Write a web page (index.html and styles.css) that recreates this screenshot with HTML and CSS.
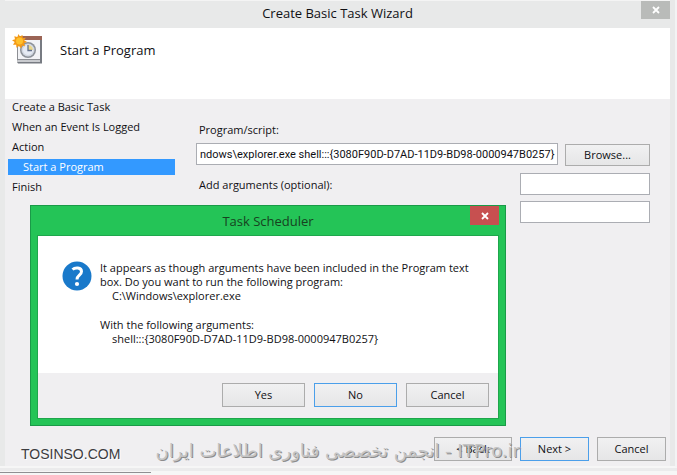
FILE: index.html
```html
<!DOCTYPE html>
<html lang="en">
<head>
<meta charset="utf-8">
<title>Create Basic Task Wizard</title>
<link rel="stylesheet" href="styles.css">
</head>
<body>
<div class="wizard">
  <header class="titlebar">
    <h1 class="title">Create Basic Task Wizard</h1>
    <button class="close" type="button" aria-label="Close"><svg width="8" height="8" viewBox="0 0 8 8"><path d="M1 1l6 6M7 1L1 7" stroke="#fff" stroke-width="1.8"/></svg></button>
  </header>
  <section class="banner">
    <svg class="banner-icon" width="32" height="32" viewBox="0 0 32 32">
      <path d="M5 28V5h24v23l-2 2H7z" fill="#8d8f94"/>
      <path d="M6 5h22v21H6z" fill="#f2f3f6"/>
      <path d="M6 3h24v4H6z" fill="#9b6455"/>
      <path d="M28 7h2v22l-2 1z" fill="#777b82"/>
      <path d="M5 27h23v2H6z" fill="#c9cbcf"/>
      <path d="M5 29h25v1.500H6z" fill="#777b82"/>
      <circle cx="16" cy="17" r="8" fill="#8d9299"/>
      <circle cx="16" cy="17" r="6.500" fill="#d2d8e2"/>
      <circle cx="16" cy="17" r="5" fill="#e6ebf4"/>
      <path d="M16 12v5h5a5 5 0 0 0-5-5" fill="#ead88c"/>
      <path d="M16 12v5.500h4" fill="none" stroke="#64718a" stroke-width="1.300"/>
      <path d="M6.500 1l1.400 2.600L10.500 2l.3 3 3-.2-1.600 2.500L15 9l-3 1.300 1 2.900-3-.7-.8 2.900L7 13l-2.600 1.800-.2-3.100-3.200.1L2.700 9 0 7.200l3-1L2.300 3.200l3 .8z" fill="#f49a16"/>
      <circle cx="7.500" cy="8" r="3.500" fill="#ffc12b"/>
    </svg>
    <h2 class="banner-title">Start a Program</h2>
  </section>
  <main class="content">
    <ol class="steps">
      <li>Create a Basic Task</li>
      <li>When an Event Is Logged</li>
      <li>Action</li>
      <li class="current" aria-current="step">Start a Program</li>
      <li>Finish</li>
    </ol>
    <form class="fields">
      <label for="program">Program/script:</label>
      <div class="row">
        <input class="box program" id="program" type="text" value="ndows\explorer.exe shell:::{3080F90D-D7AD-11D9-BD98-0000947B0257}">
        <button class="btn browse" type="button">Browse...</button>
      </div>
      <div class="row args">
        <label for="args">Add arguments (optional):</label>
        <input class="box short" id="args" type="text">
      </div>
      <div class="row start">
        <input class="box short" type="text" aria-label="Start in (optional)">
      </div>
    </form>
  </main>
  <footer class="actions">
    <button class="btn back" type="button">&lt; Back</button>
    <button class="btn primary" type="button">Next &gt;</button>
    <button class="btn" type="button">Cancel</button>
  </footer>
</div>
<div class="edge"></div>

<div class="dialog" role="dialog" aria-labelledby="dialog-title">
  <div class="dialog-bar">
    <h2 class="title" id="dialog-title">Task Scheduler</h2>
    <button class="close danger" type="button" aria-label="Close"><svg width="8" height="8" viewBox="0 0 8 8"><path d="M1 1l6 6M7 1L1 7" stroke="#fff" stroke-width="1.800"/></svg></button>
  </div>
  <div class="dialog-panel">
    <div class="message">
      <svg class="question" width="30" height="30" viewBox="0 0 30 30">
        <circle cx="15" cy="15" r="14.500" fill="#1979ca"/>
        <path d="M10.500 8.500c2.500-2.300 9-2.500 9 2 0 3.800-4.500 3.600-4.500 8" fill="none" stroke="#fff" stroke-width="3"/>
        <circle cx="15" cy="23" r="2.100" fill="#fff"/>
      </svg>
      <div class="message-text">
        <p>It appears as though arguments have been included in the Program text<br>box. Do you want to run the following program:</p>
        <p class="value">C:\Windows\explorer.exe</p>
        <p class="second">With the following arguments:</p>
        <p class="value">shell:::{3080F90D-D7AD-11D9-BD98-0000947B0257}</p>
      </div>
    </div>
    <div class="dialog-actions">
      <button class="btn" type="button">Yes</button>
      <button class="btn primary" type="button">No</button>
      <button class="btn" type="button">Cancel</button>
    </div>
  </div>
</div>

<div class="mark site">TOSINSO.COM</div>
<div class="mark persian" lang="fa" dir="rtl"><bdi>ITPro.ir</bdi> - انجمن تخصصی فناوری اطلاعات ایران</div>
</body>
</html>
```
FILE: styles.css
```css
* { box-sizing: border-box; }

body {
  margin: 0;
  position: relative;
  min-height: 100vh;
  display: flex;
  flex-direction: column;
  background: #ebebec;
  color: #101014;
  font: 11px/14px "Open Sans", sans-serif;
}

h1, h2, p, ol { margin: 0; padding: 0; font-weight: normal; }

button, input { font: inherit; color: inherit; }

.wizard {
  flex: 1;
  display: flex;
  flex-direction: column;
  border-right: 2px solid #f3f3f4;
  border-bottom: 2px solid #f6f6f6;
  padding: 0 5px;
  background: #e8e9e9;
}

.titlebar, .dialog-bar {
  position: relative;
  display: flex;
  align-items: center;
  justify-content: center;
  height: 28px;
}

.titlebar { border-top: 1px solid #f4f4f4; padding-bottom: 3px; }

.title { font-size: 13px; line-height: 20px; }

.close {
  position: absolute;
  top: 0;
  right: 0;
  display: flex;
  align-items: center;
  justify-content: center;
  width: 29px;
  height: 18px;
  padding: 0;
  border: 0;
  background: #b9bbb9;
}

.close.danger { background: #c75050; height: 19px; }

.banner {
  display: flex;
  gap: 16px;
  height: 71px;
  padding: 5px 7px;
  background: #fff;
}

.banner-title { font-size: 13px; line-height: 34px; }

.content {
  flex: 1;
  display: grid;
  grid-template-columns: 167px 1fr;
  gap: 21px;
  padding: 0 20px 0 3px;
  background: #f0eff1;
}

.steps { list-style: none; }
.steps li { padding: 1px 4px; margin-bottom: 4px; line-height: 14px; }
.steps .current { padding-left: 15px; background: #3399ff; color: #fff; }

.fields { padding-top: 24px; }
.fields label { display: block; padding-left: 3px; }

.row { display: flex; gap: 7px; }

.box {
  height: 22px;
  min-width: 0;
  padding: 0 0 0 3px;
  border: 1px solid #abadb3;
  background: #fff;
  font: 11px/14px Roboto, sans-serif;
}

.program { flex: 1; }
.fields > .row:nth-of-type(1) { margin-top: 6px; }
.args { justify-content: space-between; margin-top: 7px; }
.args label { padding-top: 5px; }
.start { justify-content: flex-end; margin-top: 6px; }
.short { width: 130px; }

.btn {
  height: 24px;
  width: 69px;
  padding: 0;
  border: 1px solid #acacac;
  background: linear-gradient(#f1f1f2, #e6e6e7);
}

.btn.primary { border-color: #4b9fea; }
.browse { width: 85px; height: 22px; margin-top: 1px; }
.btn.back { width: 78px; }

.actions {
  display: flex;
  justify-content: flex-end;
  gap: 8px;
  padding: 0 4px 5px;
  background: #f0eff1;
}

.edge {
  height: 7px;
  border-top: 3px solid #ebebec;
  background: linear-gradient(#8f8f92, #8f8f92) left 1px / 151px 1px no-repeat, #f6f6f6;
}

.dialog {
  position: absolute;
  left: 30px;
  top: 205px;
  width: 476px;
  border: 1px solid #1a9a48;
  padding: 0 6px 6px;
  background: #24c457;
}

.dialog-bar { height: 29px; color: #17421f; }

.dialog-panel { border: 1px solid #1fa64c; background: #fff; }

.message { display: flex; gap: 8px; padding: 25px 24px; height: 137px; }
.question { flex: none; }
.message-text { white-space: nowrap; }
.value { padding-left: 12px; }
.second { margin-top: 15px; }

.dialog-actions {
  display: flex;
  justify-content: flex-end;
  gap: 9px;
  padding: 10px 9px 11px;
  background: #f0eff1;
}

.dialog-actions .btn { width: 83px; }

.mark { position: absolute; white-space: nowrap; }

.site {
  left: 21px;
  bottom: 13px;
  color: #3c3c40;
  font: 14px/16px "Liberation Sans", sans-serif;
  text-shadow: 1px 1px 0 #fff;
}

.persian {
  right: 157px;
  bottom: 12px;
  color: #c4c4c4;
  font: 18px/24px "DejaVu Sans", sans-serif;
  text-shadow: 1px 1px 0 #8c8c8c;
}
```
